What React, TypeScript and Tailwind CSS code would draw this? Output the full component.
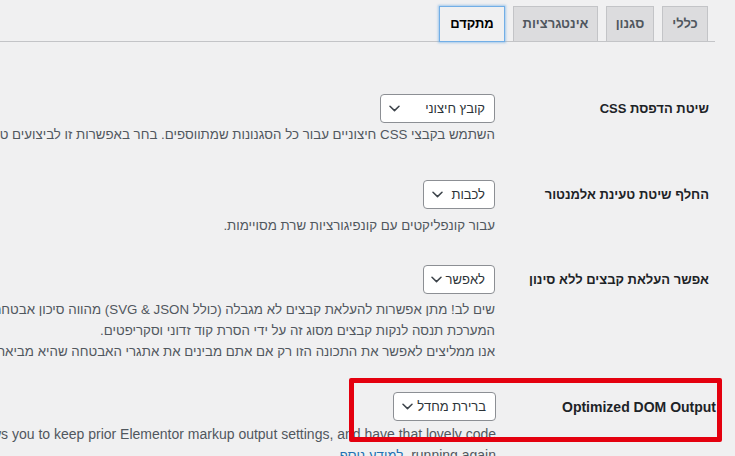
import React from 'react'

const tabs = [
  { label: 'כללי', w: 'w-[46px]' },
  { label: 'סגנון', w: 'w-[48px]' },
  { label: 'אינטגרציות', w: 'w-[85px]' },
  { label: 'מתקדם', w: 'w-[66px]', active: true },
]

function Chevron() {
  return (
    <svg width="11" height="7" viewBox="0 0 11 7" fill="none" className="shrink-0">
      <path d="M1 1.2 L5.5 5.6 L10 1.2" stroke="#3c434a" strokeWidth="1.5" strokeLinecap="round" strokeLinejoin="round" />
    </svg>
  )
}

function Select({ value, width }: { value: string; width: string }) {
  return (
    <div
      className={`${width} h-[29px] flex items-center justify-between gap-[4px] pr-[9px] pl-[8px] bg-white border border-[#8c8f94] rounded-[4px] text-[13px] text-[#2c3338] whitespace-nowrap`}
    >
      <span>{value}</span>
      <Chevron />
    </div>
  )
}

export default function App() {
  return (
    <div
      dir="rtl"
      className="relative w-[735px] h-[456px] overflow-hidden bg-[#f0f0f1] text-[#1d2327]"
      style={{ fontFamily: '"Liberation Sans", Arial, "DejaVu Sans", sans-serif' }}
    >
      {/* Tabs */}
      <div className="mr-[20px] h-[42px] pt-[6px] pr-[7px] border-b border-[#c3c4c7] flex gap-[8px]">
        {tabs.map((t) => (
          <div
            key={t.label}
            className={`${t.w} h-[36px] flex items-center justify-center text-[13px] font-bold border ${
              t.active
                ? 'bg-[#f0f0f1] text-black border-[#72aee6] shadow-[0_0_2px_1px_rgba(114,174,230,0.6)] relative z-10'
                : 'bg-[#dcdcde] text-[#50575e] border-[#c3c4c7]'
            }`}
          >
            {t.label}
          </div>
        ))}
      </div>

      {/* Settings rows */}
      <div className="mr-[20px] pt-[52px]">
        {/* Row 1 */}
        <div className="flex">
          <div className="w-[220px] shrink-0 pr-[6px] pt-[6px] text-[13px] leading-[18px] font-bold">שיטת הדפסת CSS</div>
          <div className="flex-1 min-w-0">
            <Select value="קובץ חיצוני" width="w-[115px]" />
            <p className="mt-[1px] text-[13.3px] leading-[21px] text-[#50575e] whitespace-nowrap">
              השתמש בקבצי CSS חיצוניים עבור כל הסגנונות שמתווספים. בחר באפשרות זו לביצועים טובים יותר (מומלץ).
            </p>
          </div>
        </div>

        {/* Row 2 */}
        <div className="flex mt-[35px]">
          <div className="w-[220px] shrink-0 pr-[6px] pt-[6px] text-[13px] leading-[18px] font-bold">החלף שיטת טעינת אלמנטור</div>
          <div className="flex-1 min-w-0">
            <Select value="לכבות" width="w-[72px]" />
            <p className="mt-[6px] text-[13.3px] leading-[21px] text-[#50575e] whitespace-nowrap">
              עבור קונפליקטים עם קונפיגורציות שרת מסויימות.
            </p>
          </div>
        </div>

        {/* Row 3 */}
        <div className="flex mt-[29px]">
          <div className="w-[220px] shrink-0 pr-[6px] pt-[6px] text-[13px] leading-[18px] font-bold">אפשר העלאת קבצים ללא סינון</div>
          <div className="flex-1 min-w-0">
            <Select value="לאפשר" width="w-[72px]" />
            <div className="mt-[5px] text-[13.3px] leading-[21px] text-[#50575e] whitespace-nowrap">
              <p>שים לב! מתן אפשרות להעלאת קבצים לא מגבלה (כולל SVG &amp; JSON) מהווה סיכון אבטחה פוטנציאלי.</p>
              <p>המערכת תנסה לנקות קבצים מסוג זה על ידי הסרת קוד זדוני וסקריפטים.</p>
              <p>אנו ממליצים לאפשר את התכונה הזו רק אם אתם מבינים את אתגרי האבטחה שהיא מביאה.</p>
            </div>
          </div>
        </div>

        {/* Row 4 */}
        <div className="flex mt-[30px]">
          <div className="w-[220px] shrink-0 -mr-[1px] pt-[6px] text-[14px] leading-[18px] font-bold">Optimized DOM Output</div>
          <div className="flex-1 min-w-0">
            <Select value="ברירת מחדל" width="w-[103px]" />
            <div className="mt-[3px] text-[14px] leading-[21px] text-[#50575e] whitespace-nowrap">
              <p>Developers, please note! Opting out of this feature allows you to keep prior Elementor markup output settings, and have that lovely code</p>
              <p>
                running again. <a className="text-[#2271b1] underline text-[13.3px]">למידע נוסף</a>
              </p>
            </div>
          </div>
        </div>
      </div>

      {/* Highlight box */}
      <div className="absolute left-[349px] top-[378px] w-[373px] h-[64px] border-[5px] border-[#e4000f] rounded-[2px] pointer-events-none" />
    </div>
  )
}
